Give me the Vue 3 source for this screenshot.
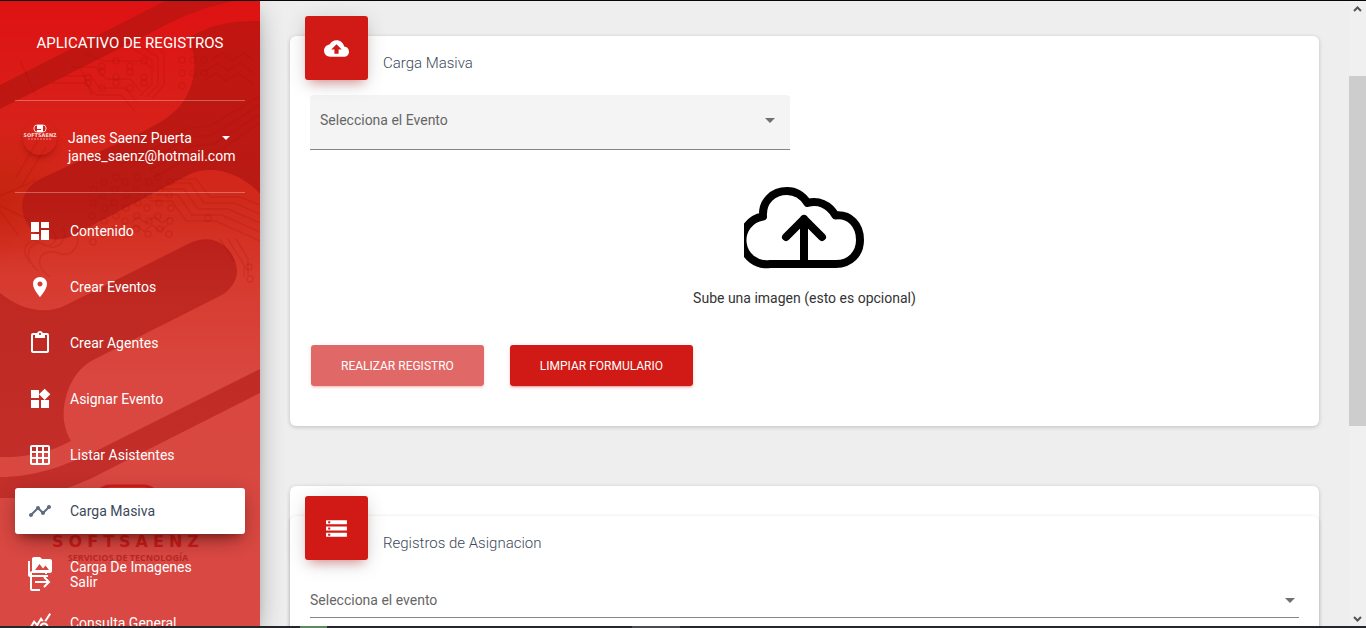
<script setup>
import { ref } from 'vue'

const items = [
  { label: 'Contenido', d: 'M3 13h8V3H3v10zm0 8h8v-6H3v6zm10 0h8V11h-8v10zm0-18v6h8V3h-8z' },
  { label: 'Crear Eventos', d: 'M12 2C8.13 2 5 5.13 5 9c0 5.25 7 13 7 13s7-7.75 7-13c0-3.87-3.13-7-7-7zm0 9.5c-1.38 0-2.5-1.12-2.5-2.5s1.12-2.5 2.5-2.5 2.5 1.12 2.5 2.5-1.12 2.5-2.5 2.5z' },
  { label: 'Crear Agentes', d: 'M19 2h-4.18C14.4.84 13.3 0 12 0c-1.3 0-2.4.84-2.82 2H5c-1.1 0-2 .9-2 2v16c0 1.1.9 2 2 2h14c1.1 0 2-.9 2-2V4c0-1.1-.9-2-2-2zm-7 0c.55 0 1 .45 1 1s-.45 1-1 1-1-.45-1-1 .45-1 1-1zm7 18H5V4h2v3h10V4h2v16z' },
  { label: 'Asignar Evento', d: 'M13 13v8h8v-8h-8zM3 21h8v-8H3v8zM3 3v8h8V3H3zm13.66-1.31L11 7.34 16.66 13l5.66-5.66-5.66-5.65z' },
  { label: 'Listar Asistentes', d: 'M20 2H4c-1.1 0-2 .9-2 2v16c0 1.1.9 2 2 2h16c1.1 0 2-.9 2-2V4c0-1.1-.9-2-2-2zM8 20H4v-4h4v4zm0-6H4v-4h4v4zm0-6H4V4h4v4zm6 12h-4v-4h4v4zm0-6h-4v-4h4v4zm0-6h-4V4h4v4zm6 12h-4v-4h4v4zm0-6h-4v-4h4v4zm0-6h-4V4h4v4z' },
  { label: 'Carga Masiva', active: true, d: 'M23 8c0 1.1-.9 2-2 2-.18 0-.35-.02-.51-.07l-3.56 3.55c.05.16.07.34.07.52 0 1.1-.9 2-2 2s-2-.9-2-2c0-.18.02-.36.07-.52l-2.55-2.55c-.16.05-.34.07-.52.07s-.36-.02-.52-.07l-4.55 4.56c.05.16.07.33.07.51 0 1.1-.9 2-2 2s-2-.9-2-2 .9-2 2-2c.18 0 .35.02.51.07l4.56-4.55C8.02 9.36 8 9.18 8 9c0-1.1.9-2 2-2s2 .9 2 2c0 .18-.02.36-.07.52l2.55 2.55c.16-.05.34-.07.52-.07s.36.02.52.07l3.55-3.56C19.02 8.35 19 8.18 19 8c0-1.1.9-2 2-2s2 .9 2 2z' },
  { label: 'Carga De Imagenes', d: 'M2 6H0v5h.01L0 20c0 1.1.9 2 2 2h18v-2H2V6zm20-2h-8l-2-2H6c-1.1 0-1.99.9-1.99 2L4 16c0 1.1.9 2 2 2h16c1.1 0 2-.9 2-2V6c0-1.1-.9-2-2-2zM7 15l4.5-6 3.5 4.51 2.5-3.01L21 15H7z' },
  { label: 'Consulta General', d: 'M19.88 18.47c.44-.7.7-1.51.7-2.39 0-2.49-2.01-4.5-4.5-4.5s-4.5 2.01-4.5 4.5 2.01 4.5 4.49 4.5c.88 0 1.7-.26 2.39-.7L21.58 23 23 21.58l-3.12-3.11zm-3.8.11c-1.38 0-2.5-1.12-2.5-2.5s1.12-2.5 2.5-2.5 2.5 1.12 2.5 2.5-1.12 2.5-2.5 2.5zm-.36-8.5c-.74.02-1.45.18-2.1.45l-.55-.83-3.8 6.18-3.01-3.52-3.63 5.81L1 17l5-8 3 3.5L13 6l2.72 4.08zm2.59.5c-.64-.28-1.33-.45-2.05-.49L21.38 2 23 3.18l-4.69 7.4z' },
]

const evento = ref('')
const registro = ref('')
</script>

<template>
  <div class="app">
    <aside class="sidebar">
      <svg class="backdrop" viewBox="0 0 260 628" preserveAspectRatio="xMidYMin slice" aria-hidden="true">
        <defs>
          <linearGradient id="fondo" x1="0" y1="0" x2="0" y2="1">
            <stop offset="0" stop-color="#de1212" />
            <stop offset="0.17" stop-color="#d91f19" />
            <stop offset="0.32" stop-color="#d02a1b" />
            <stop offset="0.44" stop-color="#d73a2e" />
            <stop offset="0.6" stop-color="#d94740" />
            <stop offset="1" stop-color="#d94843" />
          </linearGradient>
          <linearGradient id="banda" x1="0" y1="0" x2="0" y2="500" gradientUnits="userSpaceOnUse">
            <stop offset="0" stop-color="#c31411" />
            <stop offset="0.4" stop-color="#b81b14" />
            <stop offset="0.6" stop-color="#bf2922" />
            <stop offset="1" stop-color="#c32f2b" />
          </linearGradient>
          <radialGradient id="brillo" cx="0" cy="195" r="70" gradientUnits="userSpaceOnUse">
            <stop offset="0" stop-color="#c62410" />
            <stop offset="1" stop-color="#c62410" stop-opacity="0" />
          </radialGradient>
        </defs>
        <rect width="260" height="628" fill="url(#fondo)" />
        <rect width="90" height="300" fill="url(#brillo)" />
        <g fill="url(#banda)">
          <path d="M0 84 165 0H236C205 5 183 15 160 27L0 108Z" />
          <path d="M260 20C230 19 205 25 188 38C197 52 196 76 188 92C179 112 160 122 140 132L40 178C25 186 20 200 23 212C28 235 50 243 70 236L190 173C212 163 242 172 260 193Z" />
          <path d="M0 292C20 308 45 315 66 304L190 242C215 230 236 248 237 270C237 280 230 290 220 295L95 358C70 370 62 400 64 420Q66 432 71 440C50 452 20 457 0 456Z" />
          <path d="M260 368 100 448C60 468 30 476 0 476V497C40 498 62 490 90 478L260 392Z" />
        </g>
        <g class="traces">
          <path d="M60 75h30l10 12h25l12 14M52 82h34l10 12h25l14 16M70 66h26l10 12h24l10 12M84 52l20 8h40l10 10M100 45h28l24 14v24l-12 12M112 42h24l22 14v28l-12 12M128 38h18l18 14v32l-12 14" />
          <path d="M260 95l-50 30-22 2-40 24-30 2M260 104l-48 30-22 2-42 24-30 2M260 113l-46 30-22 2-42 24M260 122l-44 30-22 2-40 22M210 60l12-8 10 8 12-8 10 8M206 70l12-8 10 8 12-8 14 10M204 80l12-8 10 8 12-8 16 12" />
          <path d="M150 200h22l14 20h30l44 20M156 194h22l14 20h30l38 17M162 188h22l14 20h30l32 14M168 182h22l14 20h30l26 11M174 178h22l14 18h30l20 8M236 238l12 20v16M228 238l16 26v12M220 238l14 22" />
          <path d="M130 222l8-6 8 6 8-6 8 6 8-6M128 230l8-6 8 6 8-6 8 6 8-6M30 262c-12-14 0-28 10-20s22-4 12-12M38 270c-20-18-4-34 8-26s24-8 16-18M50 276c-20-14-8-30 8-24s24-12 18-20" />
          <path d="M0 205l30 14M0 195l36-16M0 210l18 24M16 176l30-50M22 184l24-38M80 66l12 28M20 60l16 34" />
          <g>
            <circle v-for="n in 40" :key="n" :cx="92 + (n % 8) * 11 + (n % 3)" :cy="176 + Math.floor(n / 8) * 13 + (n % 2) * 5" r="3" />
            <circle v-for="n in 14" :key="'s' + n" :cx="88 + (n % 5) * 14" :cy="60 + Math.floor(n / 5) * 11 + (n % 2) * 5" r="3" />
            <circle v-for="n in 9" :key="'r' + n" :cx="182 + (n % 3) * 11" :cy="46 + Math.floor(n / 3) * 13" r="3" />
            <circle cx="249" cy="266" r="3" /><circle cx="250" cy="278" r="3" /><circle cx="208" cy="217" r="3" />
          </g>
        </g>
        <rect class="emblem" x="93" y="485" width="68" height="40" rx="18" />
        <text class="brand" x="128" y="546" text-anchor="middle">SOFTSAENZ</text>
        <text class="tagline" x="128" y="560" text-anchor="middle">SERVICIOS DE TECNOLOGÍA</text>
      </svg>

      <div class="sidebar-body">
        <div class="logo">APLICATIVO DE REGISTROS</div>
        <div class="user">
          <svg class="avatar" width="34" height="34" viewBox="0 0 34 34" aria-hidden="true">
            <rect x="11" y="4" width="12" height="7" rx="3" fill="none" stroke="#fff" stroke-opacity=".8" />
            <path d="M20 5h-5v2h4v3h-5" fill="none" stroke="#fff" stroke-width="2" />
            <text x="17" y="16" text-anchor="middle" class="avatar-name">SOFTSAENZ</text>
            <path d="M5 18h24" stroke="#fff" stroke-opacity=".45" stroke-dasharray="2 1" />
          </svg>
          <button class="user-button" type="button">
            <span>Janes Saenz Puerta</span>
            <i class="caret"></i>
            <span class="mail">janes_saenz@hotmail.com</span>
          </button>
        </div>
        <nav class="menu">
          <a v-for="item in items" :key="item.label" href="#" class="item" :class="{ active: item.active }">
            <svg width="24" height="24" viewBox="0 0 24 24" aria-hidden="true"><path :d="item.d" /></svg>
            <span>{{ item.label }}</span>
          </a>
        </nav>
      </div>
      <a href="#" class="item logout">
        <svg width="24" height="24" viewBox="0 0 24 24" aria-hidden="true">
          <path d="M18 4V2H4Q3 2 3 3V19Q3 20 4 20H12M7 12H20M16 7L21 12L16 17" fill="none" stroke="#fff" stroke-width="2" />
        </svg>
        <span>Salir</span>
      </a>
    </aside>

    <main class="content">
      <section class="card">
        <header class="card-header">
          <div class="badge">
            <svg width="25" height="25" viewBox="0 0 24 24" aria-hidden="true"><path d="M19.35 10.04C18.67 6.59 15.64 4 12 4 9.11 4 6.6 5.64 5.35 8.04 2.34 8.36 0 10.91 0 14c0 3.31 2.69 6 6 6h13c2.76 0 5-2.24 5-5 0-2.64-2.05-4.78-4.65-4.96zM14 13v4h-4v-4H7l5-5 5 5h-3z" /></svg>
          </div>
          <h4>Carga Masiva</h4>
        </header>
        <form class="form" @submit.prevent>
          <div class="field filled">
            <select v-model="evento" aria-label="Selecciona el Evento">
              <option value="">Selecciona el Evento</option>
            </select>
            <i class="arrow"></i>
          </div>
          <button class="upload" type="button">
            <svg width="120" height="82" viewBox="0 0 120 82" aria-hidden="true">
              <path d="M26 77A23.500 23.500 0 0 1 19 29.500C18 14 29 4 43 4C52 4 59 9 63.500 16C74 13 85 17 91.500 28.500C106 27 116 38 116 53C116 67 106 77 92 77ZM60 77V32M42 50 60 32 78 50" />
            </svg>
            <span>Sube una imagen (esto es opcional)</span>
          </button>
          <div class="actions">
            <button class="btn" type="submit" disabled>REALIZAR REGISTRO</button>
            <button class="btn" type="reset">LIMPIAR FORMULARIO</button>
          </div>
        </form>
      </section>

      <section class="card outer">
        <div class="card inner">
          <header class="card-header">
            <div class="badge">
              <svg width="25" height="25" viewBox="0 0 24 24" aria-hidden="true"><path d="M2 20h20v-4H2v4zm2-3h2v2H4v-2zM2 4v4h20V4H2zm4 3H4V5h2v2zm-4 7h20v-4H2v4zm2-3h2v2H4v-2z" /></svg>
            </div>
            <h4>Registros de Asignacion</h4>
          </header>
          <div class="field line">
            <select v-model="registro" aria-label="Selecciona el evento">
              <option value="">Selecciona el evento</option>
            </select>
            <i class="arrow"></i>
          </div>
        </div>
      </section>
    </main>

    <div class="scrollbar" aria-hidden="true">
      <svg width="9" height="6" viewBox="0 0 9 6"><path d="M1 5 4.500 1.500 8 5" /></svg>
      <div class="track"><div class="thumb"></div></div>
      <svg width="9" height="6" viewBox="0 0 9 6"><path d="M1 1 4.500 4.500 8 1" /></svg>
    </div>
    <div class="taskbar" aria-hidden="true"></div>
  </div>
</template>

<style>
html, body { margin: 0; overflow: hidden; }
</style>

<style scoped>
* { box-sizing: border-box; }
.app {
  position: relative;
  display: flex;
  height: 100vh;
  overflow: hidden;
  border-top: 1px solid #0c0406;
  background: #eee;
  font-family: Roboto, "Liberation Sans", sans-serif;
  font-size: 14px;
  line-height: 20px;
  color: #333;
}
button, select { font: inherit; border: 0; margin: 0; cursor: pointer; }

.sidebar {
  position: relative;
  z-index: 2;
  flex: 0 0 260px;
  color: #fff;
  box-shadow: 0 10px 30px -12px rgba(0, 0, 0, .42), 0 4px 25px 0 rgba(0, 0, 0, .12), 0 8px 10px -5px rgba(0, 0, 0, .2);
}
.backdrop { position: absolute; inset: 0; width: 100%; height: 100%; }
.traces { fill: none; stroke: #a81008; stroke-opacity: .2; stroke-width: 1.5; }
.emblem { fill: none; stroke: #d01c18; stroke-width: 3; }
.brand { font: bold 16px "DejaVu Sans", sans-serif; letter-spacing: 5px; fill: #c91d19; }
.tagline { font: bold 9px "Open Sans", sans-serif; fill: #b52a25; }
.sidebar-body { position: relative; height: 100%; overflow: hidden; padding: 0 15px; }
.logo { height: 100px; padding-top: 32px; text-align: center; font-size: 15px; border-bottom: 1px solid rgba(255, 255, 255, .3); }
.user { display: flex; height: 92px; padding: 20px 0 0 8px; border-bottom: 1px solid rgba(255, 255, 255, .3); }
.avatar { flex: none; border-radius: 50%; box-shadow: 0 4px 6px -2px rgba(120, 0, 0, .5); }
.avatar-name { font: bold 5px "DejaVu Sans", sans-serif; fill: #fff; fill-opacity: .85; }
.user-button {
  flex: 1;
  display: grid;
  grid-template-columns: 1fr 8px;
  align-content: start;
  align-items: center;
  padding: 8px 15px 0 11px;
  background: none;
  color: #fff;
  line-height: 18px;
  text-align: left;
}
.mail { grid-column: 1 / -1; }
.caret { border: 4px solid transparent; border-top-color: #fff; border-bottom: 0; }
.menu { display: flex; flex-direction: column; gap: 10px; padding-top: 15px; }
.item {
  display: flex;
  flex: none;
  align-items: center;
  gap: 18px;
  height: 46px;
  padding: 0 13px;
  border-radius: 3px;
  color: #fff;
  text-decoration: none;
}
.item svg { flex: none; fill: #fff; }
.item.active {
  background: #fff;
  color: #3c4858;
  box-shadow: 0 12px 20px -10px rgba(60, 0, 0, .4), 0 4px 20px 0 rgba(0, 0, 0, .2), 0 7px 8px -5px rgba(60, 0, 0, .3);
}
.item.active svg { fill: #5f6b80; }
.logout { position: absolute; left: 15px; right: 15px; bottom: 23px; }

.content { flex: 1; min-width: 0; padding: 35px 30px 0; }
.card {
  position: relative;
  border-radius: 6px;
  background: #fff;
  box-shadow: 0 1px 4px 0 rgba(0, 0, 0, .2);
}
.card-header { display: flex; gap: 15px; height: 59px; padding: 0 15px; }
.badge {
  display: grid;
  place-items: center;
  flex: none;
  width: 63px;
  height: 64px;
  margin-top: -20px;
  border-radius: 3px;
  background: #d11a16;
  box-shadow: 0 4px 20px 0 rgba(0, 0, 0, .14), 0 7px 10px -5px rgba(209, 26, 22, .4);
}
.badge svg { fill: #fff; }
h4 { margin: 17px 0 0; font-size: 15px; font-weight: 300; line-height: 20px; color: #3c4858; }
.form { padding: 0 20px 40px; }
.field { display: grid; align-items: center; }
.field select, .arrow { grid-area: 1 / 1; }
.field select { width: 100%; appearance: none; background: none; outline: 0; color: #666; }
.arrow { justify-self: end; border: 5px solid transparent; border-top-color: #707070; border-bottom: 0; pointer-events: none; }
.filled { width: 49%; max-width: 480px; height: 55px; padding: 0 15px 4px 10px; border-radius: 4px 4px 0 0; border-bottom: 1px solid #858585; background: #f4f4f4; }
.upload { display: flex; flex-direction: column; align-items: center; gap: 19px; margin: 37px auto 0; padding: 0; background: none; color: #333; }
.upload svg { fill: none; stroke: #000; stroke-width: 8; stroke-linecap: round; stroke-linejoin: round; }
.actions { display: flex; gap: 26px; margin-top: 37px; padding-left: 1px; }
.btn {
  height: 41px;
  padding: 0 30px;
  border-radius: 3px;
  background: #d11a16;
  color: #fff;
  font-size: 12px;
  box-shadow: 0 2px 2px 0 rgba(209, 26, 22, .14), 0 3px 1px -2px rgba(209, 26, 22, .2), 0 1px 5px 0 rgba(209, 26, 22, .12);
}
.btn:disabled { opacity: .65; }
.outer { margin-top: 60px; padding-top: 30px; }
.inner { height: 300px; box-shadow: 0 1px 4px 0 rgba(0, 0, 0, .14); }
.line { height: 43px; margin: 0 20px; padding-top: 8px; border-bottom: 1px solid #858585; }
.line .arrow { margin-right: 4px; }

.scrollbar { display: flex; flex-direction: column; align-items: center; flex: 0 0 17px; padding: 5px 0 6px; background: #f0f0f0; }
.scrollbar svg { fill: none; stroke: #555; stroke-width: 2; }
.track { flex: 1; width: 100%; padding-top: 64px; }
.thumb { height: 350px; background: #cdcdcd; }
.taskbar { position: absolute; z-index: 3; left: 0; right: 0; bottom: 0; height: 2px; background: linear-gradient(90deg, #25262b 300px, #5b8a5e 300px 327px, #25262b 327px 632px, #4a4b50 632px 680px, #25262b 680px); }
</style>
